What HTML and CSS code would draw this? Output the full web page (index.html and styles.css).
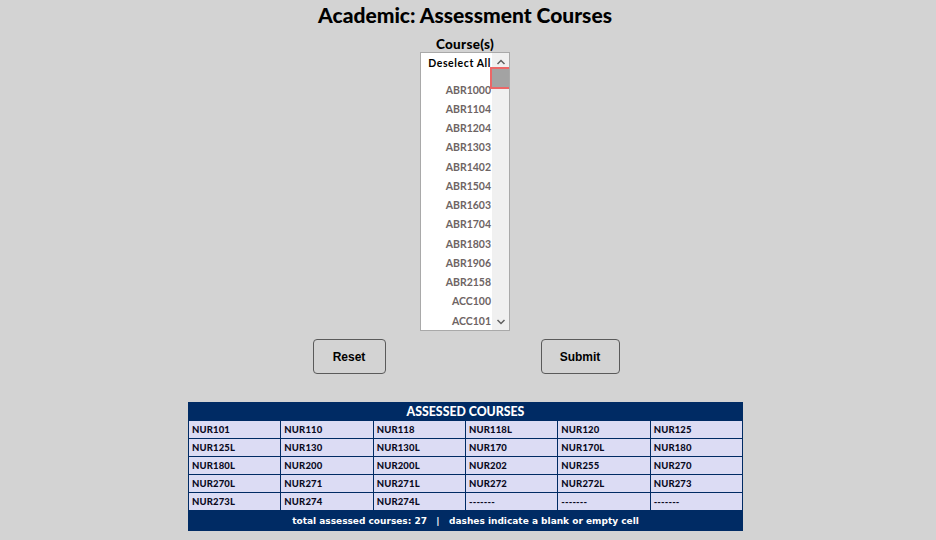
FILE: index.html
```html
<!DOCTYPE html>
<html>
<head>
<meta charset="utf-8">
<title>Academic: Assessment Courses</title>
<link rel="stylesheet" href="styles.css">
</head>
<body>
<div class="page">
  <h1 class="title">Academic: Assessment Courses</h1>
  <div class="field">
    <div class="label">Course(s)</div>
    <div class="listbox">
      <div class="options">
        <div class="opt first">Deselect All</div>
        <div class="opt">ABR1000</div>
        <div class="opt">ABR1104</div>
        <div class="opt">ABR1204</div>
        <div class="opt">ABR1303</div>
        <div class="opt">ABR1402</div>
        <div class="opt">ABR1504</div>
        <div class="opt">ABR1603</div>
        <div class="opt">ABR1704</div>
        <div class="opt">ABR1803</div>
        <div class="opt">ABR1906</div>
        <div class="opt">ABR2158</div>
        <div class="opt">ACC100</div>
        <div class="opt">ACC101</div>
      </div>
      <div class="scrollbar">
        <svg class="arrow" width="10" height="8" viewBox="0 0 10 8"><path d="M1.5 6 L5 2.5 L8.5 6" fill="none" stroke="#606060" stroke-width="1.5"/></svg>
        <svg class="arrow" width="10" height="8" viewBox="0 0 10 8"><path d="M1.5 2 L5 5.5 L8.5 2" fill="none" stroke="#606060" stroke-width="1.5"/></svg>
      </div>
      <div class="thumb"></div>
    </div>
  </div>
  <div class="buttons">
    <button class="btn reset">Reset</button>
    <button class="btn submit">Submit</button>
  </div>
  <div class="courses">
    <div class="head">ASSESSED COURSES</div>
    <div class="cell">NUR101</div><div class="cell">NUR110</div><div class="cell">NUR118</div><div class="cell">NUR118L</div><div class="cell">NUR120</div><div class="cell">NUR125</div>
    <div class="cell">NUR125L</div><div class="cell">NUR130</div><div class="cell">NUR130L</div><div class="cell">NUR170</div><div class="cell">NUR170L</div><div class="cell">NUR180</div>
    <div class="cell">NUR180L</div><div class="cell">NUR200</div><div class="cell">NUR200L</div><div class="cell">NUR202</div><div class="cell">NUR255</div><div class="cell">NUR270</div>
    <div class="cell">NUR270L</div><div class="cell">NUR271</div><div class="cell">NUR271L</div><div class="cell">NUR272</div><div class="cell">NUR272L</div><div class="cell">NUR273</div>
    <div class="cell">NUR273L</div><div class="cell">NUR274</div><div class="cell">NUR274L</div><div class="cell">-------</div><div class="cell">-------</div><div class="cell">-------</div>
    <div class="foot">total assessed courses: 27 &nbsp; | &nbsp; dashes indicate a blank or empty cell</div>
  </div>
</div>
</body>
</html>
```
FILE: styles.css
```css
html, body {
  margin: 0;
  padding: 0;
  background: #d3d3d3;
}
body {
  font-family: Lato, "DejaVu Sans", sans-serif;
  color: #000;
}
.page {
  width: 930px;
  display: flex;
  flex-direction: column;
  align-items: center;
}
.title {
  margin: 2px 0 0;
  font-size: 21px;
  line-height: 26px;
  font-weight: 900;
}
.field {
  margin-top: 9px;
  display: flex;
  flex-direction: column;
  align-items: center;
}
.label {
  font-size: 13.5px;
  font-weight: 900;
  letter-spacing: 0.3px;
  line-height: 15px;
}
.listbox {
  position: relative;
  width: 88px;
  height: 277px;
  border: 1px solid #a9a9a9;
  background: #fff;
  display: flex;
  overflow: hidden;
}
.options {
  flex: 1;
  display: flex;
  flex-direction: column;
  align-items: flex-end;
  padding-right: 1px;
}
.opt {
  height: 19.25px;
  line-height: 19.25px;
  font-size: 10.5px;
  font-weight: bold;
  color: #6e6464;
  white-space: nowrap;
}
.opt.first {
  color: #000;
  height: 20px;
  line-height: 20px;
  letter-spacing: 0.6px;
  margin-bottom: 7.5px;
}
.scrollbar {
  width: 17px;
  background: #f0f0f0;
  display: flex;
  flex-direction: column;
  justify-content: space-between;
  align-items: center;
  padding: 5px 0 4px;
}
.arrow {
  display: block;
}
.thumb {
  position: absolute;
  right: -2px;
  top: 14px;
  width: 17px;
  height: 18px;
  background: #a3a3a3;
  border: 2px solid #ec6767;
}
.buttons {
  margin-top: 8px;
  margin-left: 2px;
  display: flex;
  gap: 155px;
}
.btn {
  font-family: "Liberation Sans", Arial, sans-serif;
  font-size: 12px;
  font-weight: bold;
  color: #000;
  background: #d3d3d3;
  border: 1px solid #5a5a5a;
  border-radius: 4px;
  height: 35px;
  padding: 0;
}
.reset { width: 73px; }
.submit { width: 79px; }
.courses {
  margin-top: 28px;
  margin-left: 1px;
  width: 553px;
  display: grid;
  grid-template-columns: repeat(6, 1fr);
  gap: 1px;
  background: #002b64;
  padding: 0 1px;
}
.head {
  grid-column: 1 / -1;
  text-align: center;
  color: #fff;
  font-size: 12.3px;
  font-weight: 900;
  height: 18px;
  line-height: 19px;
}
.cell {
  background: #dcdcf4;
  height: 17px;
  line-height: 18px;
  font-size: 9.5px;
  font-weight: 900;
  letter-spacing: 0.15px;
  padding-left: 3px;
  color: #0a0a1e;
}
.foot {
  grid-column: 1 / -1;
  text-align: center;
  color: #fff;
  font-family: "DejaVu Sans", sans-serif;
  font-size: 9px;
  font-weight: bold;
  height: 20px;
  line-height: 20px;
}
```
